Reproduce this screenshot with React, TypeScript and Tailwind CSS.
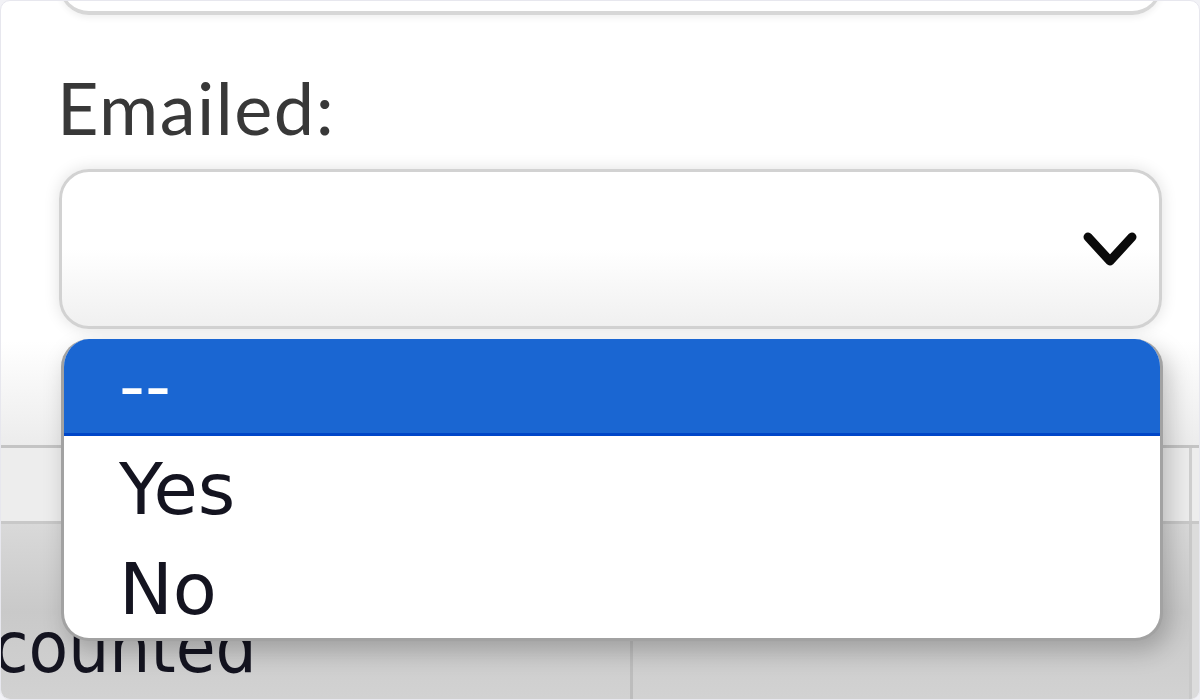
import React from "react"

const options = ["--", "Yes", "No"]

function Chevron() {
  return (
    <svg width="58" height="42" viewBox="0 0 58 42" className="shrink-0">
      <polyline
        points="7,9 29,33 51,9"
        fill="none"
        stroke="#0a0a0a"
        strokeWidth="9"
        strokeLinecap="round"
        strokeLinejoin="round"
      />
    </svg>
  )
}

export default function App() {
  return (
    <div className="w-[1200px] h-[700px] bg-[#f2f2f6] p-0">
      <div className="relative h-full rounded-[10px] border border-[#e7e7ee] bg-white overflow-hidden flex flex-col">
        {/* bottom of the previous input */}
        <div className="ml-[58px] mr-[37px] mt-[-28px] h-[42px] shrink-0 rounded-b-[30px] border-x-[3px] border-b-[4px] border-[#d7d7d7] shadow-[0_3px_6px_rgba(0,0,0,0.06)]" />

        {/* Emailed field */}
        <label
          className="block pl-[56px] mt-[56px] text-[72px] leading-[72px] tracking-[1.5px] text-[#383838] shrink-0"
          style={{ fontFamily: "Lato, 'Open Sans', sans-serif" }}
        >
          Emailed:
        </label>
        <div className="ml-[58px] mr-[37px] mt-[26px] h-[160px] shrink-0 rounded-[30px] border-[3px] border-[#d2d2d2] bg-gradient-to-b from-white via-white to-[#f0f0f0] shadow-[0_0_16px_rgba(0,0,0,0.12)] flex items-center justify-end pr-[20px]">
          <Chevron />
        </div>

        {/* table behind the open list */}
        <div
          className="mt-[12px] flex-1 flex flex-col text-[#141420]"
          style={{ fontFamily: "'DejaVu Sans Condensed', 'DejaVu Sans', Verdana, sans-serif" }}
        >
          <div className="h-[107px] shrink-0 bg-gradient-to-b from-white to-[#ececec] border-b-[3px] border-[#c4c4c4]" />
          <div className="h-[76px] shrink-0 bg-[#ededed] border-b-[3px] border-[#c8c8c8] flex">
            <div className="flex-1" />
            <div className="w-[10px] border-l-[3px] border-[#cfcfcf]" />
          </div>
          <div className="flex-1 flex bg-gradient-to-b from-[#d9d9d9] via-[#c9c9c9] to-[#d2d2d2]">
            <div className="w-[632px] border-r-[3px] border-[#bdbdbd] overflow-hidden flex items-end pb-[16px]">
              <span className="ml-[-8px] text-[72px] leading-none">counted</span>
            </div>
            <div className="flex-1" />
            <div className="w-[10px] border-l-[3px] border-[#c9c9c9] bg-[#dcdcdc]" />
          </div>
        </div>

        {/* open option list */}
        <ul
          className="absolute left-[60px] top-[338px] w-[1102px] h-[302px] rounded-[28px] border-x-[3px] border-b-[3px] border-[#a2a2a2] bg-white overflow-hidden shadow-[6px_10px_24px_rgba(0,0,0,0.22)] text-[72px] text-[#141420]"
          style={{ fontFamily: "'DejaVu Sans', Verdana, sans-serif" }}
        >
          {options.map((opt, i) => (
            <li
              key={opt}
              className={
                i === 0
                  ? "h-[97px] bg-[#1a66d2] border-b-[3px] border-[#0046c8] text-white pl-[55px] flex items-center leading-none"
                  : "h-[100px] pl-[55px] pt-[5px] flex items-center leading-none"
              }
            >
              {opt}
            </li>
          ))}
        </ul>
      </div>
    </div>
  )
}
